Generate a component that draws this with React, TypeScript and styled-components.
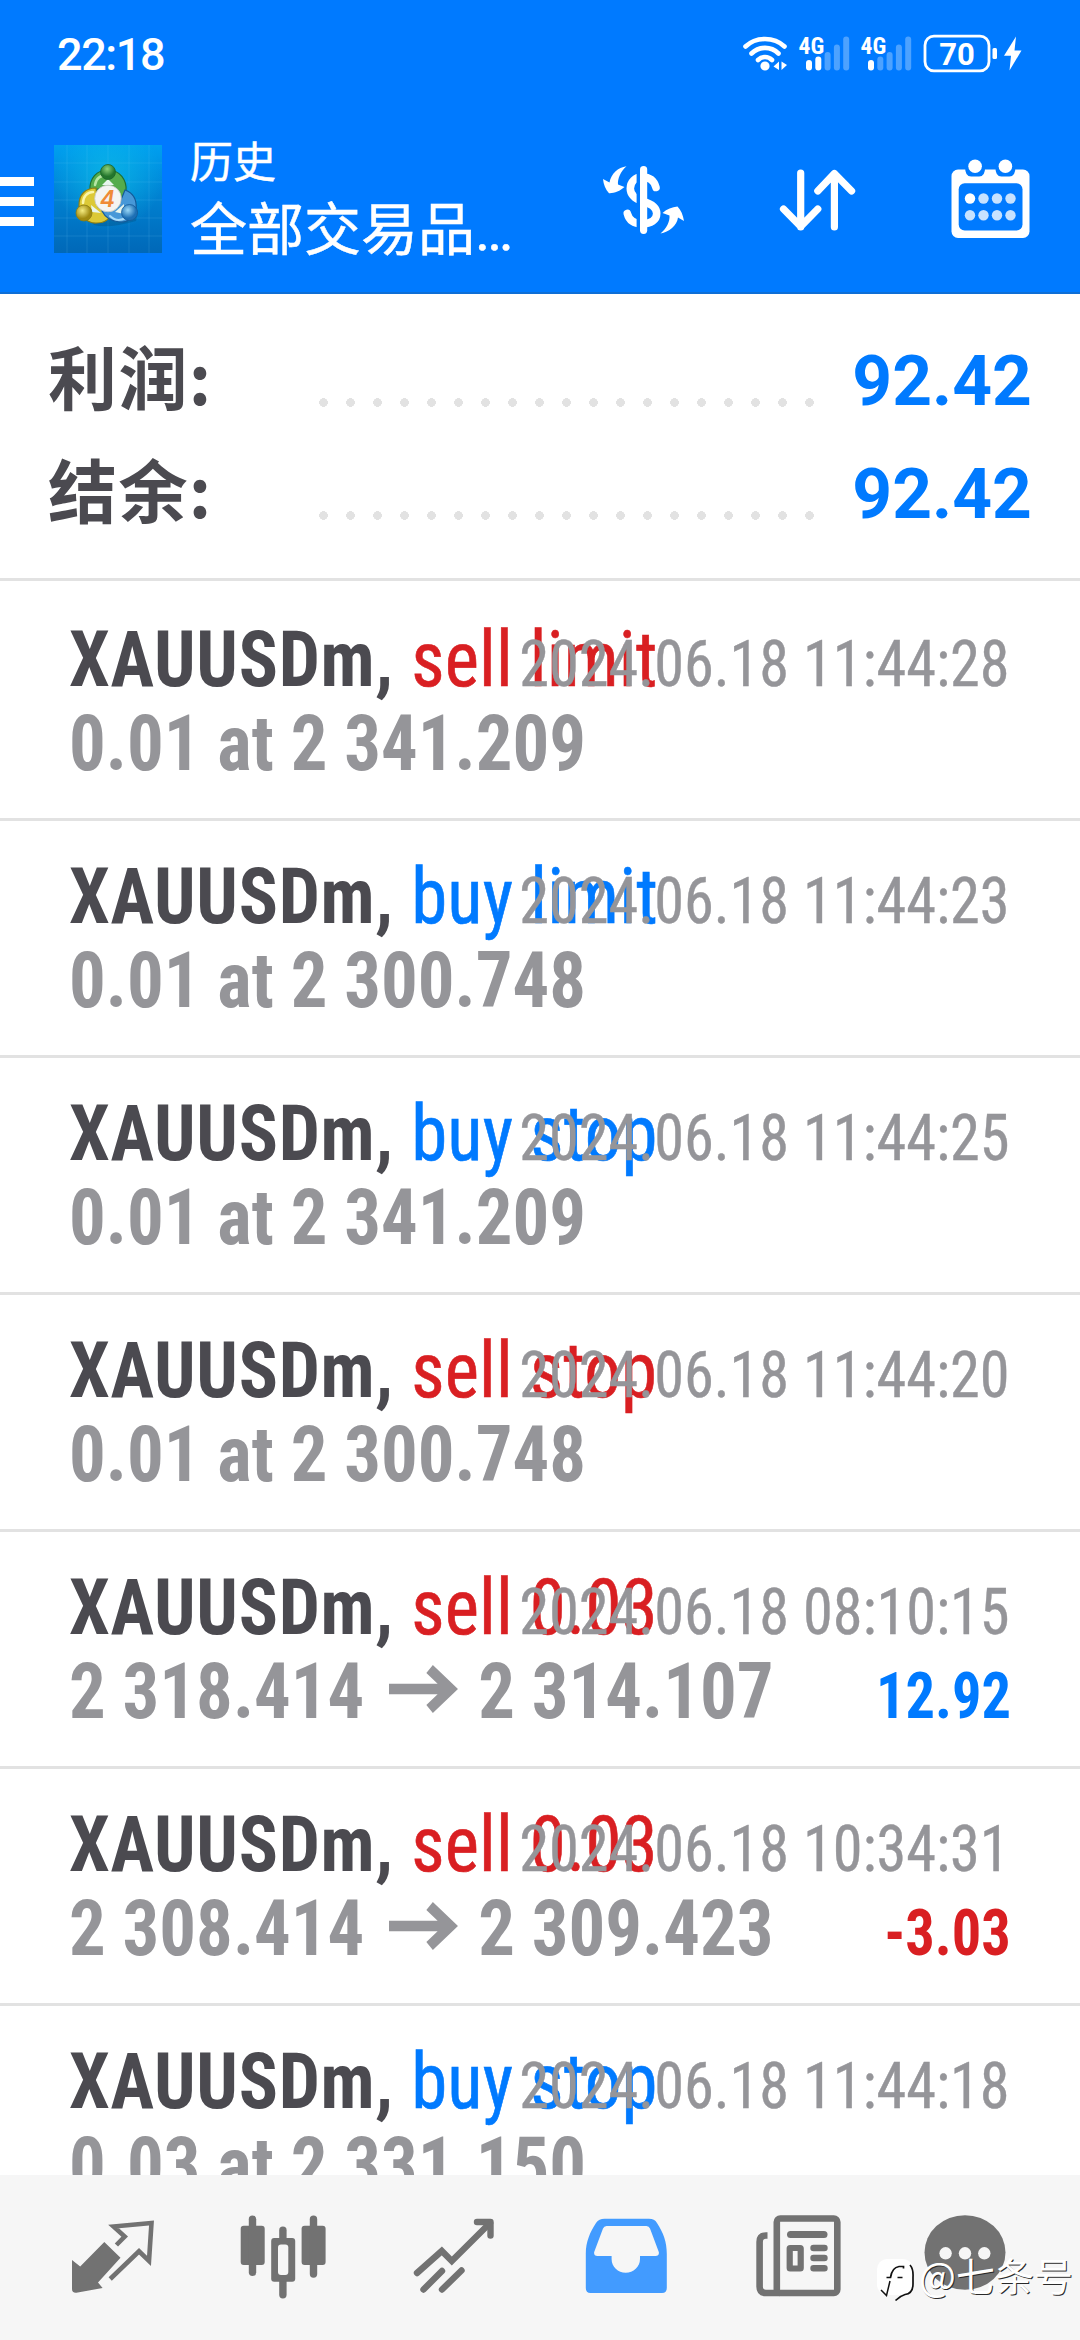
import React from 'react';
import styled, { createGlobalStyle } from 'styled-components';

const BLUE = '#007aff';
const RED = '#d91f22';
const INK = '#4b4a50';
const MUTED = '#959599';
const LINE = '#e2e2e2';
const NAV = '#727272';

const GlobalStyle = createGlobalStyle`
  * { box-sizing: border-box; }
  html, body { margin: 0; padding: 0; background: #fff; }
  svg { display: block; flex: none; overflow: visible; }
`;

const Screen = styled.div`
  width: 1080px;
  height: 2340px;
  display: flex;
  flex-direction: column;
  overflow: hidden;
  position: relative;
  background: #fff;
  font-family: Roboto, 'Noto Sans CJK SC', sans-serif;
`;

const Header = styled.header`
  height: 294px;
  flex: none;
  background: ${BLUE};
  border-bottom: 2px solid #0f6fd6;
  color: #fff;
`;

const StatusBar = styled.div`
  height: 108px;
  display: flex;
  align-items: center;
  justify-content: space-between;
  padding: 0 57px 0 57px;
`;

const Clock = styled.span`
  font-size: 45px;
  line-height: 108px;
  padding-top: 1px;
  font-weight: 500;
  letter-spacing: -1.4px;
`;

const StatusIcons = styled.div`
  display: flex;
  align-items: center;
`;

const Toolbar = styled.div`
  height: 185px;
  display: flex;
  align-items: center;
  padding-right: 50px;
`;

const MenuButton = styled.div`
  width: 34px;
  display: flex;
  flex-direction: column;
  gap: 11px;
  margin: 2px 20px 0 0;
`;

const MenuBar = styled.span`
  height: 9px;
  background: #fff;
`;

const LogoBox = styled.div`
  margin: 0 28px 3px 0;
`;

const Titles = styled.div`
  display: flex;
  flex-direction: column;
  gap: 10px;
  width: 330px;
  white-space: nowrap;
  -webkit-text-stroke: 0.5px #fff;
`;

const Title = styled.span`
  font-size: 43px;
  line-height: 50px;
`;

const Subtitle = styled.span`
  font-size: 57px;
  line-height: 66px;
`;

const Actions = styled.div`
  display: flex;
  gap: 95px;
  margin-left: auto;
`;

const Summary = styled.section`
  flex: none;
  height: 287px;
  padding: 31px 48px 0;
  border-bottom: 3px solid ${LINE};
  margin-bottom: 3px;
`;

const SummaryRow = styled.div`
  height: 113px;
  display: flex;
  align-items: baseline;
`;

const SummaryLabel = styled.span`
  width: 262px;
  font-family: 'Noto Sans CJK SC', sans-serif;
  font-size: 69px;
  line-height: 100px;
  font-weight: 700;
  letter-spacing: 1.4px;
  color: ${INK};
`;

const Leader = styled.span`
  width: 513px;
  height: 9px;
  align-self: flex-start;
  margin-top: 73px;
  background: radial-gradient(circle closest-side, #e2e2e2 92%, transparent) 0 0 / 27px 9px repeat-x;
`;

const SummaryValue = styled.span`
  margin-left: auto;
  font-size: 69.5px;
  line-height: 113px;
  font-weight: 700;
  color: ${BLUE};
`;

const List = styled.main`
  flex: 1;
  min-height: 0;
  overflow: hidden;
`;

const Item = styled.article`
  height: 237px;
  padding: 34px 70px 0 69px;
  border-bottom: 3px solid ${LINE};
  font-family: 'Roboto Condensed', sans-serif;
  white-space: pre;
`;

const Line = styled.div`
  display: grid;
  align-items: baseline;
  height: 84px;
  & > * { grid-area: 1 / 1; }
`;

const Order = styled.span`
  justify-self: start;
  font-size: 78px;
  line-height: 84px;
  transform: scaleX(0.935);
  transform-origin: left;
`;

const Symbol = styled.b`
  color: ${INK};
  letter-spacing: 0.7px;
`;

const Side = styled.span<{ $buy: boolean }>`
  color: ${p => (p.$buy ? BLUE : RED)};
  letter-spacing: 0.2px;
  -webkit-text-stroke: 0.6px currentColor;
`;

const Stamp = styled.time`
  justify-self: end;
  font-size: 64px;
  line-height: 84px;
  color: ${MUTED};
  transform: scaleX(0.942);
  transform-origin: right;
  -webkit-text-stroke: 0.4px currentColor;
`;

const Price = styled.span`
  display: flex;
  justify-self: start;
  align-items: baseline;
  font-size: 78px;
  line-height: 84px;
  font-weight: 700;
  color: ${MUTED};
  transform: scaleX(0.933);
  transform-origin: left;
`;

const ArrowBox = styled.span`
  width: 74px;
  margin: 0 22px 0 26px;
  align-self: flex-start;
  padding-top: 15px;
`;

const Profit = styled.span<{ $gain: boolean }>`
  justify-self: end;
  font-size: 64px;
  line-height: 84px;
  margin-right: -1px;
  font-weight: 700;
  color: ${p => (p.$gain ? BLUE : RED)};
  transform: scaleX(0.912);
  transform-origin: right;
`;

const NavBar = styled.nav`
  flex: none;
  height: 165px;
  display: grid;
  grid-template-columns: 224px repeat(3, 171px) 171px 172px;
  background: #f6f6f6;
`;

const NavItem = styled.div`
  display: flex;
`;

const Watermark = styled.div`
  position: absolute;
  left: 876px;
  top: 2246px;
  display: flex;
  align-items: center;
  gap: 5px;
  height: 56px;
  color: #fff;
  font-family: 'Noto Sans CJK SC', sans-serif;
  font-size: 39px;
  line-height: 56px;
  white-space: nowrap;
  text-shadow: 1px 1px 0 #2a2a2a;
  & > svg { margin-top: 13px; }
`;

const WifiSvg = styled.svg`
  margin-right: 9px;
`;

const Wifi = () => (
  <WifiSvg width="46" height="40" viewBox="743 34 46 40" fill="none" stroke="#fff" strokeWidth="4.6" strokeLinecap="round">
    <path d="M746.5 46.5C757 36.5 775 36.5 785.5 46.5" />
    <path d="M752.5 53.5C760 46 772 46 779.5 53.5" />
    <path d="M759 60C763 56 769 56 773 60" />
    <circle cx="766" cy="66" r="4.6" fill="#fff" stroke="none" />
    <path d="M780 61.500V70L774.500 66.500ZM782.500 61.500L788 65L782.500 70Z" fill="#fff" stroke="none" />
  </WifiSvg>
);

const Signal = ({ level }: { level: number }) => {
  const tops = [60, 56.500, 52, 44.500, 36.500];
  return (
    <svg width="62" height="40" viewBox="798 34 62 40">
      <text x="799.500" y="53.500" fontFamily="Roboto Condensed" fontWeight="700" fontSize="23.500" fill="#fff">4G</text>
      {tops.map((t, i) => (
        <rect key={t} x={807 + i * 9.3} y={t} width="6" height={70.5 - t} rx="3" fill="#fff" opacity={i < level ? 1 : 0.3} />
      ))}
    </svg>
  );
};

const Battery = () => (
  <svg width="102" height="40" viewBox="921 34 102 40">
    <rect x="925" y="36.200" width="64" height="34.600" rx="9" fill="none" stroke="#fff" strokeWidth="2.800" />
    <text x="957" y="65" textAnchor="middle" fontFamily="Roboto" fontWeight="700" fontSize="31" fill="#fff">70</text>
    <rect x="992.500" y="48" width="4.500" height="11" rx="1.500" fill="#fff" />
    <path d="M1016 36.500L1004 55.700H1011L1009.500 70.500L1021.500 50.500H1014.500Z" fill="#fff" />
  </svg>
);

const Logo = () => (
  <svg width="108" height="108" viewBox="0 0 108 108">
    <defs>
      <linearGradient id="sky" x1="0" y1="0" x2="0" y2="1">
        <stop offset="0" stopColor="#00a0f0" />
        <stop offset="0.5" stopColor="#0080d0" />
        <stop offset="1" stopColor="#0068b8" />
      </linearGradient>
      <radialGradient id="glow" cx="0.5" cy="0.3" r="0.5">
        <stop offset="0" stopColor="#10c8e8" stopOpacity="0.6" />
        <stop offset="1" stopColor="#10c8e8" stopOpacity="0" />
      </radialGradient>
      <radialGradient id="green" cx="0.45" cy="0.3"><stop offset="0" stopColor="#8ed27c" /><stop offset="1" stopColor="#23752c" /></radialGradient>
      <radialGradient id="gold" cx="0.4" cy="0.35"><stop offset="0" stopColor="#f5ec80" /><stop offset="1" stopColor="#a08a10" /></radialGradient>
      <radialGradient id="azure" cx="0.4" cy="0.35"><stop offset="0" stopColor="#9ad8f8" /><stop offset="1" stopColor="#1d6fb4" /></radialGradient>
    </defs>
    <rect width="108" height="108" fill="url(#sky)" />
    <rect width="108" height="108" fill="url(#glow)" />
    <path d="M13 0V108M33 0V108M54 0V108M75 0V108M95 0V108M0 18H108M0 37H108M0 55H108M0 73H108M0 91H108" stroke="#7fd4ff" strokeOpacity="0.14" strokeWidth="1" />
    <path d="M40 80Q54 84 82 76L84 66L60 40L26 66Z" fill="#034a7c" opacity="0.35" />
    <path d="M36 46C35 33 43 25 54 25C66 25 73 35 72 46C71 53 68 57 64 61L56 45L48 43Z" fill="#55ac4c" stroke="#1f6f33" strokeWidth="1.200" />
    <path d="M41 40C42 33 47 30 54 30" stroke="#b6e6a4" strokeWidth="2.500" fill="none" strokeLinecap="round" />
    <path d="M42 43C31 43 25 50 25 60C25 70 33 79 43 78C49 78 53 76 56 72L44 62Z" fill="#dcc936" stroke="#8c7c12" strokeWidth="1.200" />
    <path d="M29 58C29 52 33 47 39 47" stroke="#faf6a8" strokeWidth="2.500" fill="none" strokeLinecap="round" />
    <path d="M71 45C79 48 83 55 82 64C81 73 73 78 65 77C57 76 51 72 48 66L64 62Z" fill="#4798d8" stroke="#155a98" strokeWidth="1.200" />
    <path d="M56 71C60 75 66 76 72 73" stroke="#a8dcfa" strokeWidth="2" fill="none" strokeLinecap="round" />
    <path d="M48 40L54 34L60 40ZM37 60L47 68L38 67ZM70 59L61 67L70 69Z" fill="#e8f6ee" />
    <circle cx="54" cy="27" r="7.500" fill="url(#green)" stroke="#1c662b" strokeWidth="0.800" />
    <circle cx="30" cy="68" r="8" fill="url(#gold)" stroke="#8c7c12" strokeWidth="0.800" />
    <circle cx="75.500" cy="67.500" r="8" fill="url(#azure)" stroke="#155a98" strokeWidth="0.800" />
    <circle cx="54" cy="53.500" r="13.300" fill="#f4f4f2" stroke="#c4c9c4" strokeWidth="0.800" />
    <text x="53.500" y="62" textAnchor="middle" fontFamily="Inter" fontStyle="italic" fontWeight="600" fontSize="23" fill="#ef8a36">4</text>
  </svg>
);

const DollarIcon = () => (
  <svg width="84" height="84" viewBox="600 158.500 84 84" fill="none" stroke="#fff" strokeWidth="7.600">
    <path d="M655 187C653 179 648 176.500 641 176.500C634 176.500 629.300 181.500 629.300 188C629.300 195 634.500 198.500 642 201C651 203.500 655.700 207 655.700 213C655.700 219.500 650 223.300 641 223.300C633 223.300 628 219.500 626.300 213" strokeLinecap="round" />
    <path d="M637.300 166V233" stroke="#007aff" strokeWidth="3.400" />
    <path d="M642.600 169.200V229.800" strokeWidth="7.200" strokeLinecap="round" />
    <path d="M625.500 165.700C617 167 610 173 608.500 182L602 178.500C602.500 184 604.500 189 608 192.700C613 193 619 190.500 623.500 186.500L617 184C616.500 178 619.500 171 625.500 165.700Z" fill="#fff" stroke="none" />
    <path d="M659.500 233C668 231.500 676 225 677 217L683 220.500C682 214.500 680 209.500 676.500 206C671 206.500 666 208.500 661.500 212.500L668.500 215C669 221 665.500 228 659.500 233Z" fill="#fff" stroke="none" />
  </svg>
);

const SortIcon = () => (
  <svg width="76" height="84" viewBox="780 158.500 76 84" fill="none" stroke="#fff" strokeWidth="7.200" strokeLinecap="round" strokeLinejoin="round">
    <path d="M800.700 172.500V226.500M783.500 208.500L800.700 226L817.800 208.500" />
    <path d="M834.400 226.500V173M817.800 190.500L834.400 173L851.600 190.500" />
  </svg>
);

const CalendarIcon = () => (
  <svg width="79" height="84" viewBox="951.500 158.500 79 84">
    <rect x="952" y="169" width="78" height="68.500" rx="6.500" fill="#fff" />
    <rect x="959.200" y="182.700" width="63.800" height="47.300" rx="6" fill="#007aff" />
    {[975.600, 1005.900].map(x => (
      <g key={x}>
        <path d={`M${x - 10} 167H${x + 10}Q${x + 10} 176 ${x + 4} 176H${x - 4}Q${x - 10} 176 ${x - 10} 167Z`} fill="#007aff" />
        <circle cx={x} cy="165.700" r="6.800" fill="#fff" />
      </g>
    ))}
    {[198, 214.700].map((y, r) =>
      [970.500, 984, 997.500, 1011].map((x, c) => (
        <circle key={`${x}-${y}`} cx={x} cy={y} r="5.200" fill="#fff" opacity={r + c === 0 ? 1 : 0.78} />
      )),
    )}
  </svg>
);

const PriceArrow = () => (
  <svg width="74" height="48" viewBox="0 0 74 48" fill="none" stroke={MUTED} strokeWidth="10.500">
    <path d="M0 24H66M43.500 4L66 24L43.500 44" />
  </svg>
);

const QuotesIcon = () => (
  <svg width="224" height="165" viewBox="0 0 224 165">
    <path d="M72 85L80.200 91.500L104.300 67L120.500 82.700L98 107.500L102.600 113L76.400 117.700Q72 118 72 114Z" fill={NAV} />
    <path d="M116.400 70L124.700 61.500L113.600 51.500L151.500 48L149 86L139 76.300L110.200 104" fill="none" stroke={NAV} strokeWidth="4.600" />
  </svg>
);

const ChartIcon = () => (
  <svg width="171" height="165" viewBox="224 0 171 165" fill={NAV}>
    <rect x="240.700" y="50.700" width="24" height="39.300" rx="3" />
    <rect x="248.800" y="40.500" width="7.400" height="60.500" rx="3.700" />
    <rect x="301.600" y="50.700" width="24" height="39.300" rx="3" />
    <rect x="309.800" y="40.500" width="7.400" height="62.300" rx="3.700" />
    <rect x="279.200" y="51.500" width="7.400" height="72" rx="3.700" />
    <rect x="271.200" y="63" width="24" height="43.700" rx="3" />
    <rect x="278" y="69.500" width="10.300" height="30.500" rx="3" fill="#f6f6f6" />
  </svg>
);

const TradeIcon = () => (
  <svg width="171" height="165" viewBox="395 0 171 165" fill="none" stroke={NAV} strokeWidth="6.400" strokeLinecap="round">
    <path d="M417 98L441.800 76L451.800 86L490 48" />
    <path d="M477 47H490.500V60.500" strokeLinejoin="round" />
    <path d="M423.500 114.500L442 96M442 114.500L461.500 95.500" />
  </svg>
);

const HistoryIcon = () => (
  <svg width="171" height="165" viewBox="566 0 171 165">
    <path
      fillRule="evenodd"
      fill="#429bff"
      d="M604.500 43.800H649Q654.500 43.800 657 48C663.500 58 666.800 67 666.800 79V113Q666.800 118 662 118H590.500Q585.800 118 585.800 113V79C585.800 67 590 57 596 48Q599 43.800 604.500 43.800ZM606.500 51Q604 51 603 53.500L594.200 77Q593.500 81 597.500 81H611.600V84C611.600 92 618 97.700 625.700 97.700S640 92 640 84V81H655.500Q659.500 81 658.800 77L650 53.500Q649 51 646.500 51Z"
    />
  </svg>
);

const NewsIcon = () => (
  <svg width="171" height="165" viewBox="737 0 171 165" fill="none" stroke={NAV}>
    <rect x="776.800" y="43.500" width="60.500" height="74.500" rx="3.500" strokeWidth="6.600" />
    <path d="M767.500 60.500H766Q759.600 60.500 759.600 67V111.500Q759.600 118 766 118H780" strokeWidth="6.600" />
    <path d="M790.500 59.500H824" strokeWidth="7" strokeLinecap="round" />
    <rect x="789.700" y="73" width="11" height="20.500" rx="0.500" strokeWidth="6.200" strokeLinejoin="round" />
    <path d="M813.500 73H824.500M813.500 83H824.500M813.500 93.200H824.500" strokeWidth="6.400" strokeLinecap="round" />
  </svg>
);

const MoreIcon = () => (
  <svg width="172" height="165" viewBox="908 0 172 165">
    <ellipse cx="965" cy="77.500" rx="40.500" ry="37.300" fill={NAV} />
    {[945.600, 965, 984.300].map(x => (
      <circle key={x} cx={x} cy="78.300" r="6.200" fill="#f6f6f6" />
    ))}
  </svg>
);

const WatermarkLogo = () => (
  <svg width="38" height="44" viewBox="0 0 38 44">
    <rect x="1" y="0" width="36" height="36" rx="10" fill="#fff" />
    <path d="M34 6Q37.500 10 37 18V25Q37 34.500 29 35.500Q24 37 19.500 41.500" fill="none" stroke="#111" strokeWidth="1.700" />
    <path d="M10.500 18.500H14.500Q16 8.500 23 7.500H27.500V9.500M21.500 18.500H26.500" fill="none" stroke="#111" strokeWidth="1.700" />
    <path d="M14 22L10.500 36.500L5 31" fill="none" stroke="#111" strokeWidth="1.500" />
  </svg>
);

type Deal = { side: string; time: string; price: string; to?: string; profit?: string };

const deals: Deal[] = [
  { side: 'sell limit', time: '2024.06.18 11:44:28', price: '0.01 at 2 341.209' },
  { side: 'buy limit', time: '2024.06.18 11:44:23', price: '0.01 at 2 300.748' },
  { side: 'buy stop', time: '2024.06.18 11:44:25', price: '0.01 at 2 341.209' },
  { side: 'sell stop', time: '2024.06.18 11:44:20', price: '0.01 at 2 300.748' },
  { side: 'sell 0.03', time: '2024.06.18 08:10:15', price: '2 318.414', to: '2 314.107', profit: '12.92' },
  { side: 'sell 0.03', time: '2024.06.18 10:34:31', price: '2 308.414', to: '2 309.423', profit: '-3.03' },
  { side: 'buy stop', time: '2024.06.18 11:44:18', price: '0.03 at 2 331.150' },
];

const totals = [
  { label: '利润:', value: '92.42' },
  { label: '结余:', value: '92.42' },
];

const navIcons = [QuotesIcon, ChartIcon, TradeIcon, HistoryIcon, NewsIcon, MoreIcon];

export default function App() {
  return (
    <Screen>
      <GlobalStyle />
      <Header>
        <StatusBar>
          <Clock>22:18</Clock>
          <StatusIcons>
            <Wifi />
            <Signal level={2} />
            <Signal level={1} />
            <Battery />
          </StatusIcons>
        </StatusBar>
        <Toolbar>
          <MenuButton>
            <MenuBar />
            <MenuBar />
            <MenuBar />
          </MenuButton>
          <LogoBox>
            <Logo />
          </LogoBox>
          <Titles>
            <Title>历史</Title>
            <Subtitle>全部交易品…</Subtitle>
          </Titles>
          <Actions>
            <DollarIcon />
            <SortIcon />
            <CalendarIcon />
          </Actions>
        </Toolbar>
      </Header>
      <Summary>
        {totals.map(t => (
          <SummaryRow key={t.label}>
            <SummaryLabel>{t.label}</SummaryLabel>
            <Leader />
            <SummaryValue>{t.value}</SummaryValue>
          </SummaryRow>
        ))}
      </Summary>
      <List>
        {deals.map(d => (
          <Item key={d.time}>
            <Line>
              <Order>
                <Symbol>XAUUSDm, </Symbol>
                <Side $buy={d.side.startsWith('buy')}>{d.side}</Side>
              </Order>
              <Stamp>{d.time}</Stamp>
            </Line>
            <Line>
              <Price>
                {d.price}
                {d.to && (
                  <>
                    <ArrowBox>
                      <PriceArrow />
                    </ArrowBox>
                    {d.to}
                  </>
                )}
              </Price>
              {d.profit && <Profit $gain={!d.profit.startsWith('-')}>{d.profit}</Profit>}
            </Line>
          </Item>
        ))}
      </List>
      <NavBar>
        {navIcons.map((Icon, i) => (
          <NavItem key={i}>
            <Icon />
          </NavItem>
        ))}
      </NavBar>
      <Watermark>
        <WatermarkLogo />
        <span>@七条号</span>
      </Watermark>
    </Screen>
  );
}
